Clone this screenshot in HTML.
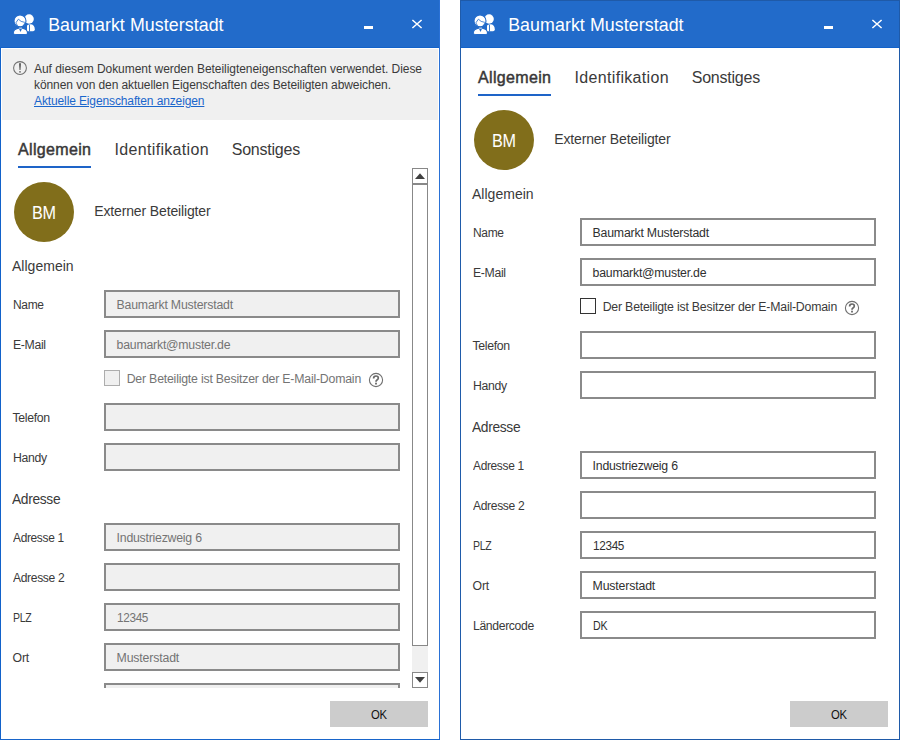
<!DOCTYPE html>
<html><head><meta charset="utf-8"><style>
html,body{margin:0;padding:0;background:#fff;}
body{width:900px;height:740px;position:relative;overflow:hidden;font-family:"Liberation Sans",sans-serif;}
.t{position:absolute;white-space:nowrap;}
.r{position:absolute;}
</style></head><body>
<div class="r" style="left:0px;top:0px;width:440px;height:740px;background:#fff;"></div>
<div class="r" style="left:0px;top:0px;width:440px;height:48px;background:#226BCA;"></div>
<div class="r" style="left:0px;top:47px;width:440px;height:1px;background:#1262CA;"></div>
<div class="r" style="left:0px;top:47px;width:1px;height:693px;background:#1262CA;"></div>
<div class="r" style="left:439px;top:0px;width:1px;height:740px;background:#2A71D6;"></div>
<div class="r" style="left:0px;top:739px;width:440px;height:1px;background:#1865CA;"></div>
<svg width="30" height="30" viewBox="10 10 30 30" style="position:absolute;left:10px;top:10px">
<g fill="#fff">
<circle cx="29.1" cy="19" r="4.7"/>
<path d="M27 31.2 L27 25.4 Q28.8 24.3 31 24.3 Q34.8 25 34.8 29.4 Q34.8 31.2 33 31.2 Z"/>
</g>
<path d="M29.5 24.8 L29.5 31.6" stroke="#226BCA" stroke-width="0.9"/>
<g fill="#fff" stroke="#226BCA" stroke-width="1.1">
<circle cx="20" cy="20.9" r="6"/>
<path d="M13.2 33.5 Q13.2 29.3 18.4 28.3 L22.6 28.3 Q27.6 29.3 27.6 33.5 Q27.6 34.6 20.4 34.6 Q13.2 34.6 13.2 33.5 Z"/>
</g>
<path d="M19.0 28.7 L22.0 28.7 L20.5 31.9 Z" fill="#226BCA"/>
<rect x="19.2" y="27.5" width="2.6" height="1.0" fill="#fff"/>
<path d="M15.8 22.9 L18.4 19.2 Q20.6 22 24.9 22.4 M16.2 23.2 Q16.7 27 20.4 27.2 Q24.1 27 24.6 23.2" fill="none" stroke="#226BCA" stroke-width="0.8"/>
</svg>
<div class="t" style="left:48.20px;top:15px;font-size:17.8px;line-height:21px;color:#fff;font-weight:normal;letter-spacing:0.075px;">Baumarkt Musterstadt</div>
<div class="r" style="left:364px;top:26px;width:9px;height:3px;background:#fff;"></div>
<svg width="12" height="12" style="position:absolute;left:411px;top:18px"><path d="M1.4 2.0 L10.6 10.0 M10.6 2.0 L1.4 10.0" stroke="#fff" stroke-width="1.55"/></svg>
<div class="r" style="left:2px;top:49px;width:436px;height:71px;background:#F0F0F0;"></div>
<svg width="16" height="16" viewBox="0 0 16 16" style="position:absolute;left:12px;top:60px"><circle cx="8" cy="8" r="6.4" fill="none" stroke="#707070" stroke-width="1.05"/><path d="M7.0 3.2 L9.0 3.2 L8.5 10.0 L7.5 10.0 Z" fill="#5a5a5a"/><rect x="7.3" y="11.1" width="1.4" height="1.5" fill="#5a5a5a"/></svg>
<div class="t" style="left:34.00px;top:62px;font-size:12px;line-height:14px;color:#3a3a3a;font-weight:normal;letter-spacing:-0.043px;">Auf diesem Dokument werden Beteiligteneigenschaften verwendet. Diese</div>
<div class="t" style="left:34.00px;top:78px;font-size:12px;line-height:14px;color:#3a3a3a;font-weight:normal;letter-spacing:-0.082px;">können von den aktuellen Eigenschaften des Beteiligten abweichen.</div>
<div class="t" style="left:34.00px;top:94px;font-size:12px;line-height:14px;color:#1A66CC;font-weight:normal;letter-spacing:-0.121px;text-decoration:underline;">Aktuelle Eigenschaften anzeigen</div>
<div class="t" style="left:18.00px;top:140px;font-size:16px;line-height:19px;color:#3a3a3a;font-weight:normal;letter-spacing:0.345px;-webkit-text-stroke:0.45px #333;">Allgemein</div>
<div class="r" style="left:18px;top:166px;width:73px;height:2px;background:#1E64C8;"></div>
<div class="t" style="left:114.60px;top:140px;font-size:16px;line-height:19px;color:#3a3a3a;font-weight:normal;letter-spacing:0.320px;">Identifikation</div>
<div class="t" style="left:231.70px;top:140px;font-size:16px;line-height:19px;color:#3a3a3a;font-weight:normal;letter-spacing:-0.217px;">Sonstiges</div>
<div class="r" style="left:1px;top:169px;width:438px;height:519px;overflow:hidden;">
<div class="r" style="left:13px;top:13px;width:60px;height:60px;border-radius:50%;background:#816E1B;"></div>
<div class="t" style="left:31.00px;top:33px;font-size:18px;line-height:22px;color:#fff;font-weight:normal;letter-spacing:-0.350px;transform:scaleX(0.9006);transform-origin:0.00px 0;">BM</div>
<div class="t" style="left:93.20px;top:34px;font-size:14px;line-height:17px;color:#3a3a3a;font-weight:normal;letter-spacing:-0.135px;">Externer Beteiligter</div>
<div class="t" style="left:11.00px;top:89px;font-size:14px;line-height:17px;color:#3a3a3a;font-weight:normal;letter-spacing:0.018px;">Allgemein</div>
<div class="t" style="left:11.50px;top:129px;font-size:12.3px;line-height:15px;color:#3a3a3a;font-weight:normal;letter-spacing:-0.350px;transform:scaleX(0.9751);transform-origin:0.00px 0;">Name</div>
<div class="r" style="left:103px;top:121px;width:296px;height:28px;box-sizing:border-box;border:2px solid #8A8A8A;background:#F0F0F0;"></div>
<div class="t" style="left:115.60px;top:129px;font-size:12.3px;line-height:15px;color:#747474;font-weight:normal;letter-spacing:-0.200px;">Baumarkt Musterstadt</div>
<div class="t" style="left:11.50px;top:169px;font-size:12.3px;line-height:15px;color:#3a3a3a;font-weight:normal;letter-spacing:-0.350px;transform:scaleX(0.9964);transform-origin:0.00px 0;">E-Mail</div>
<div class="r" style="left:103px;top:161px;width:296px;height:28px;box-sizing:border-box;border:2px solid #8A8A8A;background:#F0F0F0;"></div>
<div class="t" style="left:115.60px;top:169px;font-size:12.3px;line-height:15px;color:#747474;font-weight:normal;letter-spacing:-0.222px;">baumarkt@muster.de</div>
<div class="r" style="left:103px;top:201px;width:16px;height:16px;box-sizing:border-box;border:1px solid #ADADAD;background:#F0F0F0;"></div>
<div class="t" style="left:125.70px;top:203px;font-size:12.3px;line-height:15px;color:#747474;font-weight:normal;letter-spacing:-0.199px;">Der Beteiligte ist Besitzer der E-Mail-Domain</div>
<svg width="16" height="16" viewBox="0 0 16 16" style="position:absolute;left:367.2px;top:203px"><circle cx="8" cy="8" r="6.6" fill="none" stroke="#707070" stroke-width="1.1"/><path d="M5.6 6.4 Q5.6 4.0 8 4.0 Q10.3 4.0 10.3 6.0 Q10.3 7.2 9.0 8.0 Q8.0 8.6 8.0 9.8" fill="none" stroke="#686868" stroke-width="1.7"/><rect x="7.1" y="10.7" width="1.8" height="1.8" fill="#686868"/></svg>
<div class="t" style="left:11.50px;top:242px;font-size:12.3px;line-height:15px;color:#3a3a3a;font-weight:normal;letter-spacing:-0.328px;">Telefon</div>
<div class="r" style="left:103px;top:234px;width:296px;height:28px;box-sizing:border-box;border:2px solid #8A8A8A;background:#F0F0F0;"></div>
<div class="t" style="left:11.50px;top:282px;font-size:12.3px;line-height:15px;color:#3a3a3a;font-weight:normal;letter-spacing:-0.350px;transform:scaleX(0.9957);transform-origin:0.00px 0;">Handy</div>
<div class="r" style="left:103px;top:274px;width:296px;height:28px;box-sizing:border-box;border:2px solid #8A8A8A;background:#F0F0F0;"></div>
<div class="t" style="left:11.00px;top:322px;font-size:14px;line-height:17px;color:#3a3a3a;font-weight:normal;letter-spacing:-0.350px;transform:scaleX(0.9862);transform-origin:0.00px 0;">Adresse</div>
<div class="t" style="left:11.50px;top:362px;font-size:12.3px;line-height:15px;color:#3a3a3a;font-weight:normal;letter-spacing:-0.350px;transform:scaleX(0.9713);transform-origin:0.00px 0;">Adresse 1</div>
<div class="r" style="left:103px;top:354px;width:296px;height:28px;box-sizing:border-box;border:2px solid #8A8A8A;background:#F0F0F0;"></div>
<div class="t" style="left:115.60px;top:362px;font-size:12.3px;line-height:15px;color:#747474;font-weight:normal;letter-spacing:-0.231px;">Industriezweig 6</div>
<div class="t" style="left:11.50px;top:402px;font-size:12.3px;line-height:15px;color:#3a3a3a;font-weight:normal;letter-spacing:-0.350px;transform:scaleX(0.9827);transform-origin:0.00px 0;">Adresse 2</div>
<div class="r" style="left:103px;top:394px;width:296px;height:28px;box-sizing:border-box;border:2px solid #8A8A8A;background:#F0F0F0;"></div>
<div class="t" style="left:11.50px;top:442px;font-size:12.3px;line-height:15px;color:#3a3a3a;font-weight:normal;letter-spacing:-0.350px;transform:scaleX(0.8550);transform-origin:0.00px 0;">PLZ</div>
<div class="r" style="left:103px;top:434px;width:296px;height:28px;box-sizing:border-box;border:2px solid #8A8A8A;background:#F0F0F0;"></div>
<div class="t" style="left:115.60px;top:442px;font-size:12.3px;line-height:15px;color:#747474;font-weight:normal;letter-spacing:-0.350px;transform:scaleX(0.9575);transform-origin:0.00px 0;">12345</div>
<div class="t" style="left:11.50px;top:482px;font-size:12.3px;line-height:15px;color:#3a3a3a;font-weight:normal;letter-spacing:-0.149px;">Ort</div>
<div class="r" style="left:103px;top:474px;width:296px;height:28px;box-sizing:border-box;border:2px solid #8A8A8A;background:#F0F0F0;"></div>
<div class="t" style="left:115.60px;top:482px;font-size:12.3px;line-height:15px;color:#747474;font-weight:normal;letter-spacing:-0.157px;">Musterstadt</div>
<div class="t" style="left:11.50px;top:522px;font-size:12.3px;line-height:15px;color:#3a3a3a;font-weight:normal;letter-spacing:-0.350px;transform:scaleX(0.9904);transform-origin:0.00px 0;">Ländercode</div>
<div class="r" style="left:103px;top:514px;width:296px;height:28px;box-sizing:border-box;border:2px solid #8A8A8A;background:#F0F0F0;"></div>
<div class="t" style="left:115.60px;top:522px;font-size:12.3px;line-height:15px;color:#747474;font-weight:normal;letter-spacing:-0.350px;transform:scaleX(0.8658);transform-origin:0.00px 0;">DK</div>
</div>
<div class="r" style="left:412px;top:168px;width:16px;height:16px;box-sizing:border-box;border:1px solid #888;background:#fff;"></div>
<svg width="16" height="16" style="position:absolute;left:412px;top:168px"><path d="M3 11 L8 5.3 L13 11 Z" fill="#404040"/></svg>
<div class="r" style="left:412px;top:184px;width:16px;height:462px;box-sizing:border-box;border:1px solid #888;background:#fff;"></div>
<div class="r" style="left:412px;top:646px;width:16px;height:26px;background:#F0F0F0;"></div>
<div class="r" style="left:412px;top:672px;width:16px;height:16px;box-sizing:border-box;border:1px solid #888;background:#fff;"></div>
<svg width="16" height="16" style="position:absolute;left:412px;top:672px"><path d="M3 5 L8 10.7 L13 5 Z" fill="#404040"/></svg>
<div class="r" style="left:330px;top:701px;width:98px;height:26px;background:#CCCCCC;"></div>
<div class="t" style="left:371.00px;top:708px;font-size:12.3px;line-height:15px;color:#111;font-weight:normal;letter-spacing:-0.350px;transform:scaleX(0.9183);transform-origin:0.00px 0;">OK</div>
<div class="r" style="left:460px;top:0px;width:440px;height:740px;background:#fff;"></div>
<div class="r" style="left:460px;top:0px;width:440px;height:48px;background:#226BCA;"></div>
<div class="r" style="left:460px;top:47px;width:440px;height:1px;background:#1262CA;"></div>
<div class="r" style="left:460px;top:0px;width:440px;height:1px;background:#1F5AA8;"></div>
<div class="r" style="left:460px;top:0px;width:1px;height:740px;background:#1F5BAA;"></div>
<div class="r" style="left:899px;top:0px;width:1px;height:740px;background:#1F5AA8;"></div>
<div class="r" style="left:460px;top:739px;width:440px;height:1px;background:#1F5AA8;"></div>
<svg width="30" height="30" viewBox="10 10 30 30" style="position:absolute;left:470px;top:10px">
<g fill="#fff">
<circle cx="29.1" cy="19" r="4.7"/>
<path d="M27 31.2 L27 25.4 Q28.8 24.3 31 24.3 Q34.8 25 34.8 29.4 Q34.8 31.2 33 31.2 Z"/>
</g>
<path d="M29.5 24.8 L29.5 31.6" stroke="#226BCA" stroke-width="0.9"/>
<g fill="#fff" stroke="#226BCA" stroke-width="1.1">
<circle cx="20" cy="20.9" r="6"/>
<path d="M13.2 33.5 Q13.2 29.3 18.4 28.3 L22.6 28.3 Q27.6 29.3 27.6 33.5 Q27.6 34.6 20.4 34.6 Q13.2 34.6 13.2 33.5 Z"/>
</g>
<path d="M19.0 28.7 L22.0 28.7 L20.5 31.9 Z" fill="#226BCA"/>
<rect x="19.2" y="27.5" width="2.6" height="1.0" fill="#fff"/>
<path d="M15.8 22.9 L18.4 19.2 Q20.6 22 24.9 22.4 M16.2 23.2 Q16.7 27 20.4 27.2 Q24.1 27 24.6 23.2" fill="none" stroke="#226BCA" stroke-width="0.8"/>
</svg>
<div class="t" style="left:508.20px;top:15px;font-size:17.8px;line-height:21px;color:#fff;font-weight:normal;letter-spacing:0.075px;">Baumarkt Musterstadt</div>
<div class="r" style="left:824px;top:26px;width:9px;height:3px;background:#fff;"></div>
<svg width="12" height="12" style="position:absolute;left:871px;top:18px"><path d="M1.4 2.0 L10.6 10.0 M10.6 2.0 L1.4 10.0" stroke="#fff" stroke-width="1.55"/></svg>
<div class="t" style="left:478.00px;top:68px;font-size:16px;line-height:19px;color:#3a3a3a;font-weight:normal;letter-spacing:0.345px;-webkit-text-stroke:0.45px #333;">Allgemein</div>
<div class="r" style="left:478px;top:94px;width:73px;height:2px;background:#1E64C8;"></div>
<div class="t" style="left:574.60px;top:68px;font-size:16px;line-height:19px;color:#3a3a3a;font-weight:normal;letter-spacing:0.320px;">Identifikation</div>
<div class="t" style="left:691.70px;top:68px;font-size:16px;line-height:19px;color:#3a3a3a;font-weight:normal;letter-spacing:-0.217px;">Sonstiges</div>
<div class="r" style="left:461px;top:97px;width:438px;height:642px;overflow:hidden;">
<div class="r" style="left:13px;top:13px;width:60px;height:60px;border-radius:50%;background:#816E1B;"></div>
<div class="t" style="left:31.00px;top:33px;font-size:18px;line-height:22px;color:#fff;font-weight:normal;letter-spacing:-0.350px;transform:scaleX(0.9006);transform-origin:0.00px 0;">BM</div>
<div class="t" style="left:93.20px;top:34px;font-size:14px;line-height:17px;color:#3a3a3a;font-weight:normal;letter-spacing:-0.135px;">Externer Beteiligter</div>
<div class="t" style="left:11.00px;top:89px;font-size:14px;line-height:17px;color:#3a3a3a;font-weight:normal;letter-spacing:0.018px;">Allgemein</div>
<div class="t" style="left:11.50px;top:129px;font-size:12.3px;line-height:15px;color:#3a3a3a;font-weight:normal;letter-spacing:-0.350px;transform:scaleX(0.9751);transform-origin:0.00px 0;">Name</div>
<div class="r" style="left:119px;top:121px;width:296px;height:28px;box-sizing:border-box;border:2px solid #8A8A8A;background:#fff;"></div>
<div class="t" style="left:131.60px;top:129px;font-size:12.3px;line-height:15px;color:#303030;font-weight:normal;letter-spacing:-0.200px;">Baumarkt Musterstadt</div>
<div class="t" style="left:11.50px;top:169px;font-size:12.3px;line-height:15px;color:#3a3a3a;font-weight:normal;letter-spacing:-0.350px;transform:scaleX(0.9964);transform-origin:0.00px 0;">E-Mail</div>
<div class="r" style="left:119px;top:161px;width:296px;height:28px;box-sizing:border-box;border:2px solid #8A8A8A;background:#fff;"></div>
<div class="t" style="left:131.60px;top:169px;font-size:12.3px;line-height:15px;color:#303030;font-weight:normal;letter-spacing:-0.222px;">baumarkt@muster.de</div>
<div class="r" style="left:119px;top:201px;width:16px;height:16px;box-sizing:border-box;border:1px solid #333;background:#fff;"></div>
<div class="t" style="left:141.70px;top:203px;font-size:12.3px;line-height:15px;color:#3a3a3a;font-weight:normal;letter-spacing:-0.199px;">Der Beteiligte ist Besitzer der E-Mail-Domain</div>
<svg width="16" height="16" viewBox="0 0 16 16" style="position:absolute;left:383.20000000000005px;top:203px"><circle cx="8" cy="8" r="6.6" fill="none" stroke="#707070" stroke-width="1.1"/><path d="M5.6 6.4 Q5.6 4.0 8 4.0 Q10.3 4.0 10.3 6.0 Q10.3 7.2 9.0 8.0 Q8.0 8.6 8.0 9.8" fill="none" stroke="#686868" stroke-width="1.7"/><rect x="7.1" y="10.7" width="1.8" height="1.8" fill="#686868"/></svg>
<div class="t" style="left:11.50px;top:242px;font-size:12.3px;line-height:15px;color:#3a3a3a;font-weight:normal;letter-spacing:-0.328px;">Telefon</div>
<div class="r" style="left:119px;top:234px;width:296px;height:28px;box-sizing:border-box;border:2px solid #8A8A8A;background:#fff;"></div>
<div class="t" style="left:11.50px;top:282px;font-size:12.3px;line-height:15px;color:#3a3a3a;font-weight:normal;letter-spacing:-0.350px;transform:scaleX(0.9957);transform-origin:0.00px 0;">Handy</div>
<div class="r" style="left:119px;top:274px;width:296px;height:28px;box-sizing:border-box;border:2px solid #8A8A8A;background:#fff;"></div>
<div class="t" style="left:11.00px;top:322px;font-size:14px;line-height:17px;color:#3a3a3a;font-weight:normal;letter-spacing:-0.350px;transform:scaleX(0.9862);transform-origin:0.00px 0;">Adresse</div>
<div class="t" style="left:11.50px;top:362px;font-size:12.3px;line-height:15px;color:#3a3a3a;font-weight:normal;letter-spacing:-0.350px;transform:scaleX(0.9713);transform-origin:0.00px 0;">Adresse 1</div>
<div class="r" style="left:119px;top:354px;width:296px;height:28px;box-sizing:border-box;border:2px solid #8A8A8A;background:#fff;"></div>
<div class="t" style="left:131.60px;top:362px;font-size:12.3px;line-height:15px;color:#303030;font-weight:normal;letter-spacing:-0.231px;">Industriezweig 6</div>
<div class="t" style="left:11.50px;top:402px;font-size:12.3px;line-height:15px;color:#3a3a3a;font-weight:normal;letter-spacing:-0.350px;transform:scaleX(0.9827);transform-origin:0.00px 0;">Adresse 2</div>
<div class="r" style="left:119px;top:394px;width:296px;height:28px;box-sizing:border-box;border:2px solid #8A8A8A;background:#fff;"></div>
<div class="t" style="left:11.50px;top:442px;font-size:12.3px;line-height:15px;color:#3a3a3a;font-weight:normal;letter-spacing:-0.350px;transform:scaleX(0.8550);transform-origin:0.00px 0;">PLZ</div>
<div class="r" style="left:119px;top:434px;width:296px;height:28px;box-sizing:border-box;border:2px solid #8A8A8A;background:#fff;"></div>
<div class="t" style="left:131.60px;top:442px;font-size:12.3px;line-height:15px;color:#303030;font-weight:normal;letter-spacing:-0.350px;transform:scaleX(0.9575);transform-origin:0.00px 0;">12345</div>
<div class="t" style="left:11.50px;top:482px;font-size:12.3px;line-height:15px;color:#3a3a3a;font-weight:normal;letter-spacing:-0.149px;">Ort</div>
<div class="r" style="left:119px;top:474px;width:296px;height:28px;box-sizing:border-box;border:2px solid #8A8A8A;background:#fff;"></div>
<div class="t" style="left:131.60px;top:482px;font-size:12.3px;line-height:15px;color:#303030;font-weight:normal;letter-spacing:-0.157px;">Musterstadt</div>
<div class="t" style="left:11.50px;top:522px;font-size:12.3px;line-height:15px;color:#3a3a3a;font-weight:normal;letter-spacing:-0.350px;transform:scaleX(0.9904);transform-origin:0.00px 0;">Ländercode</div>
<div class="r" style="left:119px;top:514px;width:296px;height:28px;box-sizing:border-box;border:2px solid #8A8A8A;background:#fff;"></div>
<div class="t" style="left:131.60px;top:522px;font-size:12.3px;line-height:15px;color:#303030;font-weight:normal;letter-spacing:-0.350px;transform:scaleX(0.8658);transform-origin:0.00px 0;">DK</div>
</div>
<div class="r" style="left:790px;top:701px;width:98px;height:26px;background:#CCCCCC;"></div>
<div class="t" style="left:831.00px;top:708px;font-size:12.3px;line-height:15px;color:#111;font-weight:normal;letter-spacing:-0.350px;transform:scaleX(0.9183);transform-origin:0.00px 0;">OK</div>
</body></html>
